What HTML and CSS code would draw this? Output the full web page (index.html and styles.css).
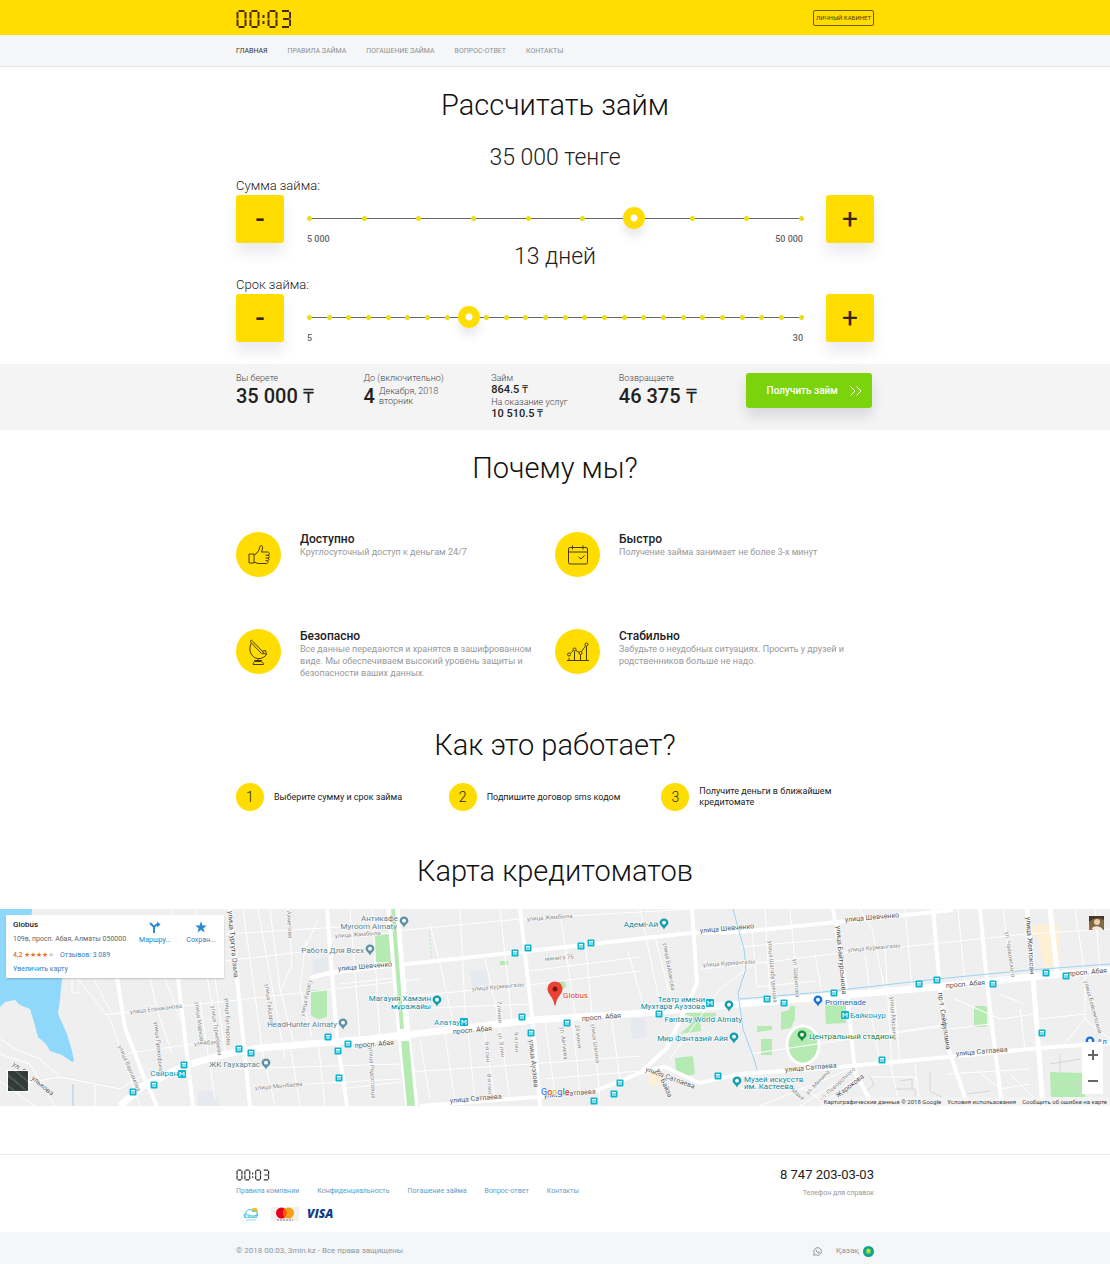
FILE: index.html
```html
<!DOCTYPE html>
<html lang="ru">
<head>
  <meta charset="UTF-8" />
  <meta name="viewport" content="width=device-width, initial-scale=1.0"/>
  <title>00:03 - Рассчитать займ</title>
  <link rel="stylesheet" href="styles.css">
</head>
<body>
  <!-- shared shapes -->
  <svg class="sprite" aria-hidden="true">
    <symbol id="logo" viewBox="0 0 56 20">
      <g fill="none" stroke="currentColor" stroke-width="2">
        <g id="zero">
          <path d="M2.500 2H8.500M2.500 18H8.500M1.500 3V9.500M1.500 10.500V17M9.500 3V9.500M9.500 10.500V17"/>
        </g>
        <use href="#zero" x="13"/>
        <path d="M27.500 6V9M27.500 12V15"/>
        <use href="#zero" x="31"/>
        <path d="M46 2H53M47 10H53M46 18H53M54 3V9.500M54 10.500V17"/>
      </g>
    </symbol>
    <symbol id="bus" viewBox="0 0 8 8">
      <rect x="0.5" y="0.5" width="7" height="7" rx="1" fill="#0bb5cf"/>
      <path d="M2 2H6V3.6H2ZM2 4.4H6V5.6H2Z" fill="#fff"/>
    </symbol>
    <symbol id="metro" viewBox="0 0 8 8">
      <rect width="8" height="8" rx="1" fill="#0bb5cf"/>
      <path d="M2 6.5V2L4 4.6L6 2V6.5" fill="none" stroke="#fff"/>
    </symbol>
    <symbol id="pin" viewBox="0 0 10 12">
      <path d="M5 0.5C2.5 0.5 0.6 2.3 0.6 4.7C0.6 7.4 4 8.3 5 11.7C6 8.3 9.4 7.4 9.4 4.7C9.4 2.3 7.5 0.5 5 0.5Z" fill="currentColor"/>
      <circle cx="5" cy="4.7" r="1.9" fill="#fff"/>
    </symbol>
  </svg>

  <header class="header">
    <div class="container header-row">
      <a href="#" class="logo" aria-label="00:03"><svg width="56" height="20"><use href="#logo"/></svg></a>
      <a href="#" class="cabinet">ЛИЧНЫЙ КАБИНЕТ</a>
    </div>
  </header>

  <nav class="nav">
    <div class="container nav-row">
      <a href="#" class="active">Главная</a>
      <a href="#">Правила займа</a>
      <a href="#">Погашение займа</a>
      <a href="#">Вопрос-ответ</a>
      <a href="#">Контакты</a>
    </div>
  </nav>

  <main>
    <section class="container calc">
      <h1>Рассчитать займ</h1>
      <div class="calc-block">
        <div class="value" id="sum-value">35 000 тенге</div>
        <label for="sum">Сумма займа:</label>
        <div class="calc-row">
          <button type="button" class="step minus" data-for="sum" data-dir="-1" aria-label="Уменьшить сумму">-</button>
          <div class="slider">
            <div class="track">
              <div class="ticks"></div>
              <input type="range" id="sum" min="5000" max="50000" step="5000" value="35000">
            </div>
            <div class="limits"><span>5 000</span><span>50 000</span></div>
          </div>
          <button type="button" class="step plus" data-for="sum" data-dir="1" aria-label="Увеличить сумму">+</button>
        </div>
      </div>
      <div class="calc-block">
        <div class="value" id="days-value">13 дней</div>
        <label for="days">Срок займа:</label>
        <div class="calc-row">
          <button type="button" class="step minus" data-for="days" data-dir="-1" aria-label="Уменьшить срок">-</button>
          <div class="slider">
            <div class="track">
              <div class="ticks"></div>
              <input type="range" id="days" min="5" max="30" step="1" value="13">
            </div>
            <div class="limits"><span>5</span><span>30</span></div>
          </div>
          <button type="button" class="step plus" data-for="days" data-dir="1" aria-label="Увеличить срок">+</button>
        </div>
      </div>
    </section>

    <section class="result">
      <div class="container result-row">
        <div>
          <p>Вы берете</p>
          <strong class="big">35 000 ₸</strong>
        </div>
        <div>
          <p>До (включительно)</p>
          <div class="date"><strong class="big">4</strong><p>Декабря, 2018<br>вторник</p></div>
        </div>
        <div class="cost">
          <p>Займ</p>
          <strong>864.5 ₸</strong>
          <p>На оказание услуг</p>
          <strong>10 510.5 ₸</strong>
        </div>
        <div>
          <p>Возвращаете</p>
          <strong class="big">46 375 ₸</strong>
        </div>
        <button type="button" class="get">Получить займ
          <svg width="12" height="10" viewBox="0 0 12 10" fill="none" stroke="#fff"><path d="M0.500 0.500L5 5L0.500 9.500M6.500 0.500L11 5L6.500 9.500"/></svg>
        </button>
      </div>
    </section>

    <section class="container">
      <h2 class="why-title">Почему мы?</h2>
      <div class="features">
        <div class="feature">
          <span class="circle">
            <svg width="24" height="24" viewBox="0 0 24 24"><path d="M2 11H7V20H2ZM7 12L10 10L12 7L13 3.5C13.5 2 15.5 2.3 15.6 4.3C15.6 6 15 7.5 14.4 9H20.5C23 9 23 12 21 12.2C23 12.5 22.6 15 21 15C22.4 15.4 22 17.6 20.5 17.7C21.6 18.3 21 20.5 19.5 20.5H11L7 19M18.5 12.2H21M18.5 15H21M18.5 17.7H20.5"/></svg>
          </span>
          <div>
            <h3>Доступно</h3>
            <p>Круглосуточный доступ к деньгам 24/7</p>
          </div>
        </div>
        <div class="feature">
          <span class="circle">
            <svg width="24" height="24" viewBox="0 0 24 24"><path d="M4 4.5H20Q21.500 4.500 21.500 6V19.500Q21.500 21 20 21H4Q2.500 21 2.500 19.500V6Q2.500 4.500 4 4.500ZM2.500 9H21.500M6.500 2.500V6.500M17 2.500V6.500M12.500 14L15 16L18.500 12.500"/></svg>
          </span>
          <div>
            <h3>Быстро</h3>
            <p>Получение займа занимает не более 3-х минут</p>
          </div>
        </div>
        <div class="feature">
          <span class="circle">
            <svg width="24" height="28" viewBox="0 0 24 28"><path d="M5 2.500L16 14C17 15.500 15.500 16.500 14.500 15.500L4 4.500C3 3 4 1.500 5 2.500ZM4 5.500C0 15 7 21.500 13 20.500C16 20 18 18.500 19.500 16.500L16 15M15.500 13L18.500 12.500L19.500 16.500M11 20.500V24M6 26.500C6 24.500 7 23.500 9 23.500H13C15 23.500 16.500 24.500 16.500 26.500ZM7 22.500H15"/></svg>
          </span>
          <div>
            <h3>Безопасно</h3>
            <p>Все данные передаются и хранятся в зашифрованном виде. Мы обеспечиваем высокий уровень защиты и безопасности ваших данных.</p>
          </div>
        </div>
        <div class="feature">
          <span class="circle">
            <svg width="24" height="24" viewBox="0 0 24 24"><path d="M1 20.500H23M3 20V18M8.500 20V11.500M14.500 20V14.500M20.500 20V6.500M4.500 13L7.500 10.500M10 10.500L13 12.500M15.500 11.500L19.500 6"/><circle cx="3" cy="14.500" r="1.500"/><circle cx="8.500" cy="9.500" r="1.500"/><circle cx="14.500" cy="13" r="1.500"/><circle cx="20.500" cy="4.500" r="1.500"/></svg>
          </span>
          <div>
            <h3>Стабильно</h3>
            <p>Забудьте о неудобных ситуациях. Просить у друзей и родственников больше не надо.</p>
          </div>
        </div>
      </div>
    </section>

    <section class="container">
      <h2>Как это работает?</h2>
      <div class="steps">
        <div class="steps-item"><span class="num">1</span><p>Выберите сумму и срок займа</p></div>
        <div class="steps-item"><span class="num">2</span><p>Подпишите договор sms кодом</p></div>
        <div class="steps-item"><span class="num">3</span><p>Получите деньги в ближайшем кредитомате</p></div>
      </div>
      <h2 class="map-title">Карта кредитоматов</h2>
    </section>

    <section class="map">
      <svg class="map-canvas" viewBox="0 0 1110 197" preserveAspectRatio="xMidYMid slice">
        <rect width="1110" height="197" fill="#f0eff0"/>
        <!-- water -->
        <path d="M0 0H32L30 30L62 69L60 90L58 105L67 125L72 142L74 152L72 153L62 146L50 142L46 135L38 128L34 113L30 100L20 96L15 91L5 93L0 98Z" fill="#8fd8fb"/>
        <path d="M73 175V197" stroke="#a5c8ea"/>
        <!-- parks -->
        <g fill="#b5eab3">
          <path d="M311 81H327V107Q319 114 311 106Z"/>
          <path d="M375 26L390 25L392 53H376Z"/>
          <path d="M500 52H508V56H500Z"/>
          <circle cx="562" cy="76" r="4"/>
          <path d="M682 136H716V139L700 143L701 154L680 157L693 145V140Z" transform="translate(0 -32)"/>
          <path d="M675 149L693 147L695 165L684 168L676 163Z"/>
          <path d="M757 117H772V121L757 123ZM761 130H772V146H761Z"/>
          <path d="M781 103L789 101L790 97H795V110L791 119L781 121Z"/>
          <path d="M825 96H846V114L826 115Z"/>
          <ellipse cx="803" cy="136" rx="16" ry="19" stroke="#fff" stroke-width="3"/>
          <rect x="974" y="97" width="13" height="21" rx="3"/>
          <path d="M1050 163L1085 164V188H1051Z"/>
        </g>
        <g fill="#fdf0d5">
          <path d="M1028 18L1058 14L1060 50L1045 62L1038 30Z"/>
          <path d="M648 165L660 162L664 174L650 177Z"/>
        </g>
        <g fill="#e6eaee">
          <path d="M312 50L328 48V66L314 69Z"/>
          <path d="M470 62L488 60V76L472 78Z"/>
          <path d="M630 110L645 108L647 128L632 130Z"/>
          <path d="M198 183L215 181L220 197H198Z"/>
        </g>
        <!-- minor streets -->
        <g fill="none" stroke="#fff" stroke-width="1">
          <path d="M77 69L110 110L140 197M93 69L112 105L300 84L420 70M105 106L125 103M72 69V84H80M150 69L157 100L172 145M165 69L180 110M128 144L230 130M145 165L120 180L60 168L40 150L15 140L0 130M0 145L30 155L55 197M95 176V197M60 168L20 175M0 172L35 197"/>
          <path d="M172 0L178 69M195 0L220 140M215 69L225 143M243 0L262 138M258 0L285 150M270 0L280 80L295 140M288 0L292 55L280 84M306 30L300 80L312 128M310 69L337 65M318 10L305 40M225 52L310 42M226 25L390 15M200 92L215 190M230 160L400 155M255 178L400 170M262 140L275 197M290 135L300 197M318 132L325 197M372 0L380 130M350 0L360 130M340 75L400 68M330 30L392 24M340 180L410 172"/>
          <path d="M395 22L520 10L690 0M430 15L440 55L455 122M460 0L466 120M485 50L500 116M500 0L512 112M400 88L530 76L640 62M405 100L530 95M530 62L640 48M560 5L566 42L575 105M585 30L600 190M610 100L620 170M628 43L645 102M410 163L530 155L640 147M420 130L430 190M445 125L455 193M468 122L475 192M484 120L495 190M500 118L510 192M545 110L555 187M572 108L580 183M640 0L660 95M655 28L672 95M670 150L720 80L760 50M545 170L640 162"/>
          <path d="M700 60L760 54L833 45L1027 25L1110 20M740 38L833 30M765 0L770 88M790 0L798 86M752 20L757 78L815 72M815 45L822 85M865 45L870 83M885 40L892 158M905 0L912 78M860 0L872 20L885 82M895 92L900 156M750 145L850 130L940 118M870 100L880 155M850 130L948 115M955 90L1000 110L1035 105M958 0L965 74M1003 0L1012 70M1020 100L1025 140M1000 85L1024 95M950 120L990 115M1075 0L1085 65M1095 0L1100 60M1085 65V110L1110 130M1085 110L1060 140M1040 110L1085 105M1010 165L1035 190M948 165L1030 160M890 155L900 197M915 155L920 197M870 168H915V192M800 197L850 165M820 197L855 170M740 180L790 170L830 197M760 197L850 160M975 160L1000 180L1030 175"/>
        </g>
        <g fill="none" stroke="#d3d6d8" stroke-width="1">
          <path d="M895 180H915V192M870 167L874 176L866 182M900 172L912 170V180M930 162V182L945 190M1050 155L1080 150M1060 145V163M1070 175H1080V185M967 185L990 182"/>
        </g>
        <!-- main roads -->
        <g fill="none" stroke="#fff" stroke-width="4">
          <path d="M120 197L143 177L187 156L230 144L260 139L370 130L533 111L643 104L740 95L823 88L937 78L1030 68L1110 61" stroke-width="7"/>
          <path d="M310 69L328 64L370 59L520 43L690 24L740 23L953 1"/>
          <path d="M420 197L537 188L595 182L640 164L667 139L697 74L692 0"/>
          <path d="M640 163L665 158L700 174L740 165L840 158L947 148L1040 139L1110 134"/>
          <path d="M117 69L125 119L142 163L157 197M178 69L193 197M230 0L250 197M327 0L337 129L347 197"/>
          <path d="M520 0L533 116L540 197M833 0L847 84L855 163L872 195M933 0L940 79L948 139L968 197M980 0L988 83L1002 197"/>
          <path d="M1027 0L1033 68L1043 197M1050 0L1057 63" stroke-width="5"/>
          <path d="M393 0L404 126L412 197" stroke-width="13"/>
        </g>
        <path d="M393 0L402 120" stroke="#b5eab3" stroke-width="4"/>
        <path d="M405 132L411 197" stroke="#b5eab3" stroke-width="8"/>
        <path d="M429 22L432 50" stroke="#b5eab3" stroke-dasharray="2 2"/>
        <g fill="none" stroke="#9bd3f3">
          <path d="M733 0L744 40L746 60L738 84L743 120L754 150L757 161M740 90L823 83L937 70L1030 61L1110 55"/>
        </g>
        <!-- street names -->
        <g class="street">
          <text transform="translate(527 12) rotate(-4)">улица Жамбыла</text>
          <text transform="translate(335 29) rotate(-4)">улица Жамбыла</text>
          <text transform="translate(472 82) rotate(-5)">улица Курмангазы</text>
          <text transform="translate(703 58) rotate(-4)">улица Курмангазы</text>
          <text transform="translate(848 43) rotate(-5)">улица Курмангазы</text>
          <text transform="translate(545 52) rotate(-5)">минига 76</text>
          <text transform="translate(130 105) rotate(-7)">улица Есенжанова</text>
          <text transform="translate(194 137) rotate(-5)">ул. Абая</text>
          <text transform="translate(255 181) rotate(-5)">улица Мынбаева</text>
          <text transform="translate(118 137) rotate(67)">улица Варламова</text>
          <text transform="translate(154 113) rotate(84)">улица Прокофьева</text>
          <text transform="translate(195 93) rotate(83)">улица Маркова</text>
          <text transform="translate(211 97) rotate(82)">улица Туркебаева</text>
          <text transform="translate(225 89) rotate(88)">улица Бутлерова</text>
          <text transform="translate(265 75) rotate(83)">улица Гайдара</text>
          <text transform="translate(304 108) rotate(-78)">улица Карасу</text>
          <text transform="translate(287 2) rotate(87)">Ахметова</text>
          <text transform="translate(369 138) rotate(87)">улица Радостовца</text>
          <text transform="translate(497 92) rotate(87)">7 линия</text>
          <text transform="translate(498 124) rotate(83)">ул. 8 лин</text>
          <text transform="translate(485 133) rotate(87)">6-я лин</text>
          <text transform="translate(514 123) rotate(87)">9-я лин</text>
          <text transform="translate(487 165) rotate(87)">8-я лин</text>
          <text transform="translate(560 118) rotate(83)">ул. Айтиева</text>
          <text transform="translate(575 116) rotate(83)">24 июня</text>
          <text transform="translate(591 115) rotate(83)">улица Шагина</text>
          <text transform="translate(663 34) rotate(80)">улица Байзакова</text>
          <text transform="translate(768 32) rotate(85)">улица Шагабутдинова</text>
          <text transform="translate(793 50) rotate(86)">ул. Шарипова</text>
          <text transform="translate(890 88) rotate(86)">улица Масанчи</text>
          <text transform="translate(1005 23) rotate(82)">ул. Чайковского</text>
          <text transform="translate(1084 72) rotate(75)">улица Байсеитовой</text>
          <text transform="translate(808 186) rotate(-46)">ул. Минина</text>
          <text transform="translate(822 192) rotate(-43)">ул. Поворотного</text>
          <text transform="translate(784 176) rotate(40)">ул. Маке</text>
        </g>
        <g class="street main">
          <text transform="translate(228 2) rotate(85)">улица Тургута Озала</text>
          <text transform="translate(338 62) rotate(-5)">улица Шевченко</text>
          <text transform="translate(700 24) rotate(-5)">улица Шевченко</text>
          <text transform="translate(845 13) rotate(-5)">улица Шевченко</text>
          <text transform="translate(355 139) rotate(-5)">просп. Абая</text>
          <text transform="translate(453 125) rotate(-5)">просп. Абая</text>
          <text transform="translate(582 112) rotate(-5)">просп. Абая</text>
          <text transform="translate(946 79) rotate(-5)">просп. Абая</text>
          <text transform="translate(1068 67) rotate(-5)">просп. Абая</text>
          <text transform="translate(450 194) rotate(-5)">улица Сатпаева</text>
          <text transform="translate(544 189) rotate(-5)">улица Сатпаева</text>
          <text transform="translate(785 163) rotate(-5)">улица Сатпаева</text>
          <text transform="translate(956 147) rotate(-5)">улица Сатпаева</text>
          <text transform="translate(645 162) rotate(20)">улица Сатпаева</text>
          <text transform="translate(656 161) rotate(66)">ул. Байза</text>
          <text transform="translate(529 131) rotate(84)">улица Ауэзова</text>
          <text transform="translate(836 17) rotate(85)">улица Байтурсынова</text>
          <text transform="translate(938 84) rotate(82)">пр-т. Сейфуллина</text>
          <text transform="translate(1026 8) rotate(86)">улица Желтоксан</text>
          <text transform="translate(12 156) rotate(38)">ул. С</text>
          <text transform="translate(31 170) rotate(40)">улькова</text>
          <text transform="translate(838 189) rotate(-38)">Жарокова</text>
        </g>
        <!-- places -->
        <g class="place" text-anchor="end">
          <text x="398" y="12">Антикафе</text>
          <text x="397" y="20">Myroom Almaty</text>
          <text x="364" y="44">Работа Для Всех</text>
          <text x="337" y="118">HeadHunter Almaty</text>
          <text x="260" y="158">ЖК Гаухартас</text>
        </g>
        <g class="place teal" text-anchor="end">
          <text x="658" y="18">Адемі-Ай</text>
          <text x="431" y="92">Магауия Хамзин</text>
          <text x="431" y="100">мұражайы</text>
          <text x="705" y="93">Театр имени</text>
          <text x="705" y="100">Мухтара Ауэзова</text>
          <text x="742" y="113">Fantasy World Almaty</text>
          <text x="728" y="132">Мир Фантазий Айя</text>
        </g>
        <g class="place teal">
          <text x="744" y="173">Музей искусств</text>
          <text x="744" y="180">им. Кастеева</text>
        </g>
        <g class="place cyan">
          <text x="178" y="167" text-anchor="end">Сайран</text>
          <text x="460" y="116" text-anchor="end">Алатау</text>
          <text x="850" y="109">Байконур</text>
        </g>
        <g class="place blue">
          <text x="825" y="96">Promenade</text>
          <text x="1097" y="135">Ал</text>
        </g>
        <text class="place green" x="809" y="130">Центральный стадион</text>
        <text class="place red" x="563" y="89">Globus</text>
        <!-- bus stops and metro -->
        <g id="stops"></g>
        <g color="#5e92a3">
          <use href="#pin" x="399" y="7" width="10" height="12"/>
          <use href="#pin" x="365" y="35" width="10" height="12"/>
          <use href="#pin" x="338" y="109" width="10" height="12"/>
          <use href="#pin" x="261" y="149" width="10" height="12"/>
        </g>
        <g color="#129eaf">
          <use href="#pin" x="659" y="9" width="10" height="12"/>
          <use href="#pin" x="432" y="86" width="10" height="12"/>
          <use href="#pin" x="724" y="91" width="10" height="12"/>
          <use href="#pin" x="729" y="123" width="10" height="12"/>
          <use href="#pin" x="732" y="167" width="10" height="12"/>
        </g>
        <g color="#1a73d8">
          <use href="#pin" x="813" y="86" width="10" height="12"/>
          <use href="#pin" x="1085" y="127" width="10" height="12"/>
        </g>
        <g color="#0f8a3f"><use href="#pin" x="797" y="121" width="10" height="12"/></g>
        <path d="M555 72.500C550.500 72.500 547.500 76 547.500 80C547.500 85 553.500 88 554.500 96.500H555.500C556.500 88 562.500 85 562.500 80C562.500 76 559.500 72.500 555 72.500Z" fill="#ea4335"/>
        <circle cx="555" cy="80" r="2.500" fill="#811411"/>
        <text class="google" x="541" y="186"><tspan fill="#4285f4">G</tspan><tspan fill="#ea4335">o</tspan><tspan fill="#fbbc05">o</tspan><tspan fill="#4285f4">g</tspan><tspan fill="#34a853">l</tspan><tspan fill="#ea4335">e</tspan></text>
      </svg>

      <div class="map-card">
        <div class="map-info">
          <b>Globus</b>
          <span class="address">109в, просп. Абая, Алматы 050000</span>
          <span class="rating"><em>4,2</em> <span class="stars">★★★★<i>★</i></span> <a href="#">Отзывов: 3 089</a></span>
          <a href="#">Увеличить карту</a>
        </div>
        <a href="#" class="map-action">
          <svg width="12" height="12" viewBox="0 0 12 12" fill="none" stroke="#2a8bd0" stroke-width="2"><path d="M5 12V6L1 2M5 8C5 5 7 3.500 9 3.500"/><path d="M8 0.500L11.500 3.500L8 6.500Z" fill="#2a8bd0" stroke="none"/></svg>
          Маршру...
        </a>
        <a href="#" class="map-action">
          <svg width="12" height="12" viewBox="0 0 12 12" fill="#2a8bd0"><path d="M6 0.300L7.500 4.400L11.800 4.500L8.400 7.200L9.600 11.400L6 9L2.400 11.400L3.600 7.200L0.200 4.500L4.500 4.400Z"/></svg>
          Сохран...
        </a>
      </div>
      <button type="button" class="satellite" aria-label="Спутник"></button>
      <a href="#" class="avatar" aria-label="Профиль">
        <svg width="15" height="14" viewBox="0 0 15 14"><rect width="15" height="14" fill="#7c6a45"/><path d="M0 0H15V4L10 2L4 3L0 6Z" fill="#463822"/><circle cx="8" cy="6" r="3" fill="#f0cfae"/><path d="M2 14C3 9 12 9 14 14Z" fill="#f5e9e2"/><path d="M0 8L4 14H0Z" fill="#c05c35"/></svg>
      </a>
      <div class="zoom">
        <button type="button" aria-label="Увеличить"><svg width="10" height="10" viewBox="0 0 10 10"><path d="M5 0V10M0 5H10" stroke="#666" stroke-width="2"/></svg></button>
        <button type="button" aria-label="Уменьшить"><svg width="10" height="10" viewBox="0 0 10 10"><path d="M0 5H10" stroke="#666" stroke-width="2"/></svg></button>
      </div>
      <div class="map-legal">
        <span>Картографические данные © 2018 Google</span>
        <a href="#">Условия использования</a>
        <a href="#">Сообщить об ошибке на карте</a>
      </div>
    </section>
  </main>

  <footer class="footer">
    <div class="container footer-row">
      <div>
        <a href="#" class="logo-small" aria-label="00:03"><svg width="34" height="12"><use href="#logo"/></svg></a>
        <div class="footer-links">
          <a href="#">Правила компании</a>
          <a href="#">Конфиденциальность</a>
          <a href="#">Погашение займа</a>
          <a href="#">Вопрос-ответ</a>
          <a href="#">Контакты</a>
        </div>
        <div class="payments">
          <svg class="cloud" width="16" height="14" viewBox="0 0 16 14">
            <circle cx="11.500" cy="4" r="3.300" fill="#f2c230"/>
            <path d="M3 10.500C0 10 0.500 6.500 3 6.500C3 2 8.500 1.500 9.500 4.500C13 3.500 15.500 6 14 9" fill="#fff" stroke="#35c8dc"/>
            <text x="1" y="11">Cloud</text>
            <path d="M3 13H13" stroke="#7fe3e6"/>
          </svg>
          <svg width="28" height="14" viewBox="0 0 28 14">
            <rect width="28" height="14" fill="#f3f1f0"/>
            <circle cx="10.500" cy="6" r="5.500" fill="#eb001b"/>
            <circle cx="17.500" cy="6" r="5.500" fill="#f79e1b"/>
            <path d="M14 1.800A5.500 5.500 0 0 1 14 10.200A5.500 5.500 0 0 1 14 1.800Z" fill="#ff5f00"/>
            <path d="M6 13H22" stroke="#8d7b78" stroke-dasharray="2 1"/>
          </svg>
          <span class="visa">VISA</span>
        </div>
      </div>
      <div class="phone">
        <a href="tel:87472030303">8 747 203-03-03</a>
        <p>Телефон для справок</p>
      </div>
    </div>
    <div class="copy">
      <div class="container copy-row">
        <span>© 2018 00:03, 3min.kz - Все права защищены</span>
        <div class="lang">
          <a href="#" aria-label="WhatsApp"><svg width="9" height="9" viewBox="0 0 9 9" fill="none" stroke="#8e969c"><path d="M0.700 8.300L1.300 6.300A3.800 3.800 0 1 1 2.800 7.800Z"/><path d="M3.200 2.800C3 4.500 4.500 6 6 6L6.300 5.200L5.300 4.800"/></svg></a>
          <a href="#" class="kz">Қазақ
            <svg width="11" height="11" viewBox="0 0 11 11"><circle cx="5.500" cy="5.500" r="5.500" fill="#0ba29a"/><circle cx="5.500" cy="4.800" r="2.200" fill="#c3e620"/><path d="M2.500 6.500Q5.500 9.500 8.500 6.500" stroke="#6fd02c" fill="none"/></svg>
          </a>
        </div>
      </div>
    </div>
  </footer>

  <script>
    const busStops = [
      [328, 128], [348, 135], [338, 142], [239, 140], [251, 144], [184, 156], [154, 176], [133, 183], [339, 169],
      [515, 44], [528, 39], [581, 37], [591, 34], [522, 108], [567, 114], [531, 124], [659, 105], [620, 174],
      [614, 185], [594, 192], [718, 167], [767, 90], [784, 94], [834, 84], [919, 75], [937, 71], [993, 75],
      [1046, 64], [1066, 67], [1042, 124], [882, 151]
    ];
    const metroStops = [[182, 165], [464, 113], [710, 94], [845, 106]];

    const icon = (name, [x, y]) => `<use href="#${name}" x="${x - 4}" y="${y - 4}" width="8" height="8"/>`;
    document.getElementById("stops").innerHTML =
      busStops.map(p => icon("bus", p)).join("") + metroStops.map(p => icon("metro", p)).join("");

    // one dot for each value of the slider
    document.querySelectorAll(".track").forEach(track => {
      const input = track.querySelector("input");
      const count = (input.max - input.min) / input.step + 1;
      track.querySelector(".ticks").innerHTML = "<i></i>".repeat(count);
    });

    const units = { sum: "тенге", days: "дней" };

    function showValue(input) {
      const text = input.value.replace(/(\d)(?=(\d{3})+$)/g, "$1 ");
      document.getElementById(input.id + "-value").textContent = `${text} ${units[input.id]}`;
    }

    document.querySelectorAll("input[type=range]").forEach(input => {
      input.addEventListener("input", () => showValue(input));
    });

    document.querySelectorAll(".step").forEach(btn => {
      btn.addEventListener("click", () => {
        const input = document.getElementById(btn.dataset.for);
        if (btn.dataset.dir > 0) input.stepUp();
        else input.stepDown();
        showValue(input);
      });
    });
  </script>
</body>
</html>
```

FILE: styles.css
```css
* {
  box-sizing: border-box;
}
body {
  margin: 0;
  font-family: Roboto, "Liberation Sans", sans-serif;
  font-size: 9px;
  line-height: 12px;
  color: #222;
  background: #fff;
}
h1, h2, h3, p {
  margin: 0;
}
a {
  color: inherit;
  text-decoration: none;
}
button {
  font-family: inherit;
  border: 0;
  padding: 0;
  cursor: pointer;
}
svg {
  display: block;
}
.sprite {
  position: absolute;
  width: 0;
  height: 0;
}
.container {
  max-width: 638px;
  margin: 0 auto;
}

/* header */
.header {
  background: #ffdd00;
}
.header-row {
  display: flex;
  justify-content: space-between;
  align-items: center;
  height: 35px;
}
.logo {
  color: #4b2a08;
  padding-top: 2px;
}
.cabinet {
  border: 1px solid #6b5a10;
  border-radius: 2px;
  padding: 1px 2px;
  font-size: 6px;
  color: #4b3a08;
}
.nav {
  background: #f4f6f8;
  border-bottom: 1px solid #e4e7ea;
}
.nav-row {
  display: flex;
  align-items: center;
  gap: 20px;
  height: 31px;
  font-size: 7px;
  text-transform: uppercase;
  color: #8b9297;
}
.nav-row .active {
  color: #333;
}

/* calculator */
h1, h2 {
  font-size: 29px;
  line-height: 36px;
  font-weight: 300;
  text-align: center;
  color: #111;
}
h1 {
  padding: 20px 0 15px;
}
.calc {
  padding-bottom: 28px;
}
.calc-block {
  height: 99px;
}
.calc-block label {
  display: block;
  font-size: 13px;
  line-height: 16px;
  font-weight: 300;
  margin-bottom: 1px;
}
.value {
  font-size: 23px;
  line-height: 28px;
  font-weight: 300;
  text-align: center;
  padding: 6px 0;
}
.calc-row {
  display: flex;
  gap: 22px;
}
.step {
  width: 48px;
  height: 48px;
  background: #ffdd00;
  border-radius: 3px;
  box-shadow: 0 10px 14px rgba(60, 60, 100, 0.1);
  font-size: 28px;
  line-height: 48px;
  color: #3a2408;
}
.minus {
  font-weight: 500;
}
.slider {
  flex: 1;
}
.track {
  position: relative;
  height: 22px;
  margin-top: 12px;
}
.track::before {
  content: "";
  position: absolute;
  left: 3px;
  right: 3px;
  top: 11px;
  height: 1px;
  background: #666;
}
.ticks {
  position: absolute;
  left: 1px;
  right: 0;
  top: 9px;
  display: flex;
  justify-content: space-between;
}
.ticks i {
  width: 5px;
  height: 5px;
  border-radius: 50%;
  background: #ecdc1c;
}
.track input {
  position: absolute;
  inset: 0;
  width: 100%;
  height: 22px;
  margin: 0;
  background: none;
  -webkit-appearance: none;
  appearance: none;
}
.track input::-webkit-slider-thumb {
  -webkit-appearance: none;
  width: 22px;
  height: 22px;
  border-radius: 50%;
  background: radial-gradient(circle, #fff 3px, #ffdd00 4px);
  box-shadow: 0 8px 8px rgba(60, 60, 100, 0.1);
}
.limits {
  display: flex;
  justify-content: space-between;
  margin-top: 5px;
  padding: 0 1px;
  font-weight: 500;
  line-height: 10px;
  color: #666;
}

/* result bar */
.result {
  background: #f4f4f4;
}
.result-row {
  display: grid;
  grid-template-columns: repeat(5, 1fr);
  height: 66px;
  padding-top: 9px;
}
.result p {
  font-weight: 300;
  line-height: 10px;
  color: #444;
}
.result strong {
  display: block;
  font-size: 11px;
  line-height: 14px;
  font-weight: 500;
}
.result .big {
  font-size: 20px;
  line-height: 26px;
}
.date {
  display: flex;
  gap: 4px;
}
.date p {
  padding-top: 3px;
}
.get {
  display: flex;
  justify-content: center;
  align-items: center;
  gap: 12px;
  height: 35px;
  margin-right: 2px;
  border-radius: 3px;
  background: #7bd30c;
  box-shadow: 0 8px 12px rgba(60, 60, 100, 0.15);
  color: #fff;
  font-size: 10px;
  font-weight: 500;
  padding-left: 10px;
}

/* why us */
.why-title {
  margin-top: 20px;
}
.features {
  display: grid;
  grid-template-columns: 1fr 1fr;
  row-gap: 52px;
  padding: 46px 0 48px;
}
.feature {
  display: flex;
  gap: 19px;
  padding-right: 20px;
}
.circle {
  flex: none;
  display: flex;
  align-items: center;
  justify-content: center;
  width: 45px;
  height: 45px;
  border-radius: 50%;
  background: #ffdd00;
}
.circle svg {
  fill: none;
  stroke: #4b3a08;
  stroke-linejoin: round;
}
.feature h3 {
  font-size: 12px;
  line-height: 14px;
  font-weight: 500;
}
.feature p {
  color: #999;
}

/* how it works */
.steps {
  display: grid;
  grid-template-columns: repeat(3, 1fr);
  padding: 20px 0 42px;
}
.steps-item {
  display: flex;
  align-items: center;
  gap: 10px;
  padding-right: 30px;
  line-height: 11px;
}
.num {
  flex: none;
  width: 28px;
  height: 28px;
  border-radius: 50%;
  background: #ffdd00;
  text-align: center;
  font-size: 14px;
  line-height: 28px;
  font-weight: 300;
}
.map-title {
  padding-bottom: 20px;
}

/* map */
.map {
  position: relative;
  margin-bottom: 48px;
}
.map-canvas {
  width: 100%;
  height: 197px;
}
.map text {
  font-size: 8px;
  paint-order: stroke;
  stroke: #fff;
  stroke-width: 1px;
}
.map .street text {
  font-size: 6px;
  fill: #888;
}
.map .main text {
  font-size: 7px;
  fill: #555;
}
.map .place {
  fill: #5a7d8a;
}
.map .teal {
  fill: #0a8799;
}
.map .cyan {
  fill: #0899b5;
}
.map .blue {
  fill: #1a66b8;
}
.map .green {
  fill: #1b7f3f;
}
.map .red {
  fill: #d8392b;
}
.map .google {
  font-size: 9px;
  font-weight: 500;
}
.map-card {
  position: absolute;
  left: 6px;
  top: 6px;
  width: 218px;
  height: 63px;
  display: flex;
  background: #fff;
  border-radius: 1px;
  box-shadow: 0 1px 2px rgba(0, 0, 0, 0.2);
  padding: 4px 0 0 7px;
  font-size: 7px;
}
.map-card a {
  color: #2a7fc4;
}
.map-info {
  flex: 1;
  display: flex;
  flex-direction: column;
  gap: 2px;
  white-space: nowrap;
}
.map-info b {
  font-size: 8px;
  font-weight: 500;
}
.address {
  color: #666;
}
.rating {
  margin-top: 2px;
}
.rating em {
  font-style: normal;
  font-weight: 500;
  color: #e7711b;
}
.rating a {
  margin-left: 4px;
}
.stars {
  color: #e7711b;
}
.stars i {
  color: #ccc;
  font-style: normal;
}
.map-action {
  width: 46px;
  display: flex;
  flex-direction: column;
  align-items: center;
  gap: 1px;
  padding-top: 2px;
}
.satellite {
  position: absolute;
  left: 7px;
  top: 161px;
  width: 22px;
  height: 22px;
  border: 1px solid #fff;
  background: repeating-linear-gradient(40deg, #2f3b36 0 3px, #47594e 3px 5px, #3a3a3c 5px 8px);
}
.avatar {
  position: absolute;
  right: 6px;
  top: 7px;
}
.zoom {
  position: absolute;
  right: 7px;
  bottom: 12px;
  width: 21px;
  background: #fff;
}
.zoom button {
  display: flex;
  align-items: center;
  justify-content: center;
  width: 21px;
  height: 26px;
  background: none;
}
.map-legal {
  position: absolute;
  right: 0;
  bottom: 0;
  display: flex;
  gap: 6px;
  padding: 0 3px;
  background: rgba(245, 245, 245, 0.7);
  font-size: 6px;
  line-height: 9px;
  color: #444;
}

/* footer */
.footer {
  border-top: 1px solid #eaeaea;
}
.footer-row {
  display: flex;
  justify-content: space-between;
  padding: 14px 0 11px;
}
.logo-small {
  display: block;
  color: #333;
}
.footer-links {
  display: flex;
  gap: 18px;
  margin-top: 4px;
  font-size: 7px;
  color: #6b9bc4;
}
.payments {
  display: flex;
  align-items: center;
  gap: 8px;
  padding: 10px 0 0 7px;
}
.cloud {
  margin-right: 4px;
}
.cloud text {
  font-size: 5px;
  font-weight: 700;
  fill: #1bb9cf;
}
.visa {
  font-family: "Open Sans", sans-serif;
  font-size: 12px;
  line-height: 14px;
  font-weight: 800;
  font-style: italic;
  color: #0e3f87;
}
.phone {
  text-align: right;
  font-size: 7px;
  color: #999;
}
.phone a {
  font-size: 13px;
  color: #222;
}
.phone p {
  margin-top: 4px;
}
.copy {
  background: #f4f6f8;
}
.copy-row {
  display: flex;
  justify-content: space-between;
  align-items: center;
  height: 32px;
  padding-top: 6px;
  font-size: 8px;
  color: #8e969c;
}
.lang, .kz {
  display: flex;
  align-items: center;
}
.lang {
  gap: 14px;
}
.kz {
  gap: 4px;
}
```
